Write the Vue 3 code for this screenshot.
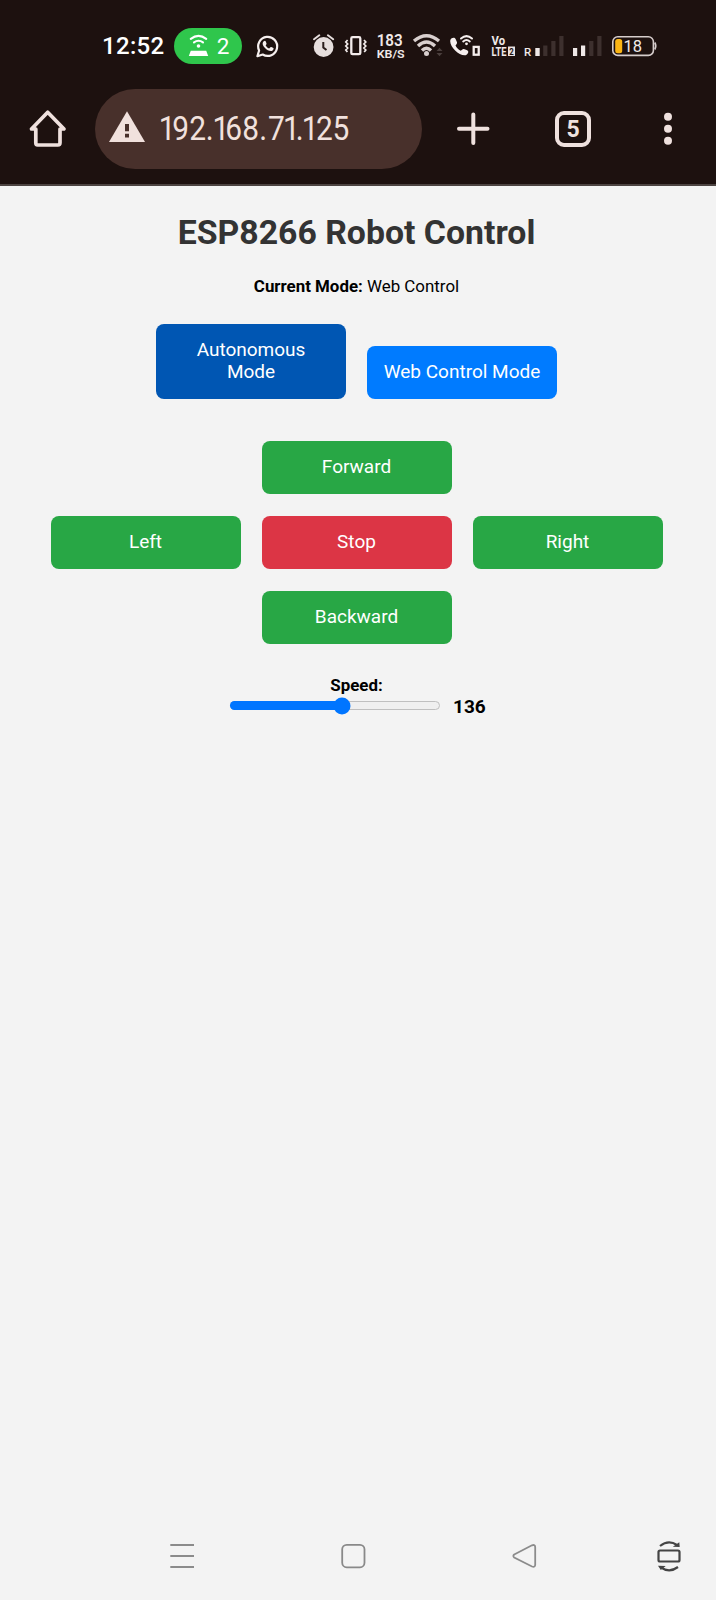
<script setup>
import { ref, computed } from 'vue'

const mode = ref('Web Control')
const speed = ref(136)
const fill = computed(() => (speed.value / 255) * 100 + '%')
</script>

<template>
  <div class="screen">
    <div class="status">
      <span class="clock">12:52</span>
      <div class="hotspot">
        <svg viewBox="188 34 22 24" width="22" height="24">
          <g fill="none" stroke="#fff" stroke-width="2.1" stroke-linecap="round">
            <path d="M190.800 38.800Q198.500 33 206.200 38.800" />
            <path d="M194 42.400Q198.500 39.200 203 42.400" />
          </g>
          <circle cx="198.500" cy="46" r="1.800" fill="#fff" />
          <path d="M190.800 50.800H206.200L208.200 56H188.800Z" fill="#fff" />
        </svg>
        <span>2</span>
      </div>
      <svg class="whatsapp" viewBox="254 32 28 28" width="28" height="28">
        <path d="M257.400 56.200L259.100 50.500A9.500 9.500 0 1 1 262.700 54.500Z" fill="none" stroke="#f6efee" stroke-width="2.200" stroke-linejoin="round" />
        <path d="M263.700 41.300C264.700 40.300 265.500 40.700 265.900 41.700L266.500 43.400C266.700 44.100 266 44.700 265.600 45.200C266.400 46.800 267.500 47.900 269.100 48.600L270.500 47.200C271 46.800 271.600 47.200 273.300 48.100C274 48.500 273.600 49.700 272.600 50.500C270.700 52.100 267.100 50.200 265 48C262.700 45.700 261.800 43 263.700 41.300Z" fill="#f6efee" />
      </svg>
      <svg class="alarm" viewBox="310 32 28 28" width="28" height="28">
        <circle cx="323.600" cy="47" r="9.900" fill="#e6dedd" />
        <path d="M314 39.200L319.300 35.300M327.900 35.300L333.200 39.200" stroke="#e6dedd" stroke-width="2" stroke-linecap="round" />
        <path d="M323.300 42V47.500L326.500 50" fill="none" stroke="#2a1d1b" stroke-width="2" />
      </svg>
      <svg class="vibrate" viewBox="344 32 24 28" width="24" height="28">
        <rect x="351.300" y="37.200" width="9" height="17" rx="1.300" fill="none" stroke="#f3eceb" stroke-width="2.300" />
        <path d="M347.600 40L345.800 42L347.700 44L345.800 46L347.700 48L345.800 50L347.400 52M364 40L365.800 42L363.900 44L365.800 46L363.900 48L365.800 50L364.200 52" fill="none" stroke="#f3eceb" stroke-width="1.700" />
      </svg>
      <svg class="rate" viewBox="375 32 32 28" width="32" height="28">
        <text x="376.700" y="46.400" font-size="16" font-weight="600" textLength="26" lengthAdjust="spacingAndGlyphs">183</text>
        <text x="376.700" y="58" font-size="11.500" font-weight="600" textLength="28" lengthAdjust="spacingAndGlyphs">KB/S</text>
      </svg>
      <svg class="wifi" viewBox="411 32 34 28" width="34" height="28">
        <g fill="none" stroke="#d9d0cf" stroke-width="3.400">
          <path d="M414 41Q426.500 30.500 439 41" />
          <path d="M418 46Q426.500 38 435 46" />
          <path d="M422 50.500Q426.500 46 431 50.500" />
        </g>
        <circle cx="426.500" cy="53.500" r="2.500" fill="#d9d0cf" />
        <path d="M436.500 51L439.500 47.800L442.500 51ZM436.500 53L439.500 56.200L442.500 53Z" fill="#4b3f3d" />
      </svg>
      <svg class="call" viewBox="448 32 34 28" width="34" height="28">
        <path d="M451.300 38.500C453 37.300 454.800 37.300 455.600 39L457 42.200C457.400 43.300 456.200 44.500 455.500 45.400C456.800 48 458.200 49.300 460.700 50.700L463.100 49.100C464 48.700 467.200 50 468 50.900C468.900 52.200 467.200 55 465 55.300C459 55.700 450.200 47.300 450.200 41.300C450.200 40.200 450.600 39.100 451.300 38.500Z" fill="#f6efee" />
        <g fill="none" stroke="#f6efee" stroke-width="2" stroke-linecap="round">
          <path d="M461 38.500Q466.500 33.700 472 38.500" />
          <path d="M463.200 41.400Q466.500 38.500 469.800 41.400" />
        </g>
        <circle cx="466.500" cy="43.800" r="1.400" fill="#f6efee" />
        <rect x="473.700" y="46.900" width="5" height="7.800" fill="none" stroke="#f6efee" stroke-width="2.300" />
      </svg>
      <svg class="volte" viewBox="490 32 27 28" width="27" height="28">
        <text x="491.500" y="45" font-size="12" font-weight="700" textLength="13.500" lengthAdjust="spacingAndGlyphs">Vo</text>
        <text x="491.500" y="56" font-size="12" font-weight="700" textLength="15" lengthAdjust="spacingAndGlyphs">LTE</text>
        <rect x="508" y="46.500" width="7" height="9.500" fill="#e9e1e0" />
        <text class="sim" x="509.300" y="54.500" font-size="9" font-weight="700" textLength="4.500" lengthAdjust="spacingAndGlyphs">2</text>
      </svg>
      <svg class="signal-a" viewBox="523 32 44 28" width="44" height="28">
        <text x="523.900" y="56.200" font-size="11.500" font-weight="500">R</text>
        <path d="M535.300 48H539.700V56H535.300Z" fill="#efe8e7" />
        <path d="M543.200 45.500H547.400V56H543.200ZM551.300 41H555.500V56H551.300ZM559.300 36H563.500V56H559.300Z" fill="#3d302e" />
      </svg>
      <svg class="signal-b" viewBox="570 32 36 28" width="36" height="28">
        <path d="M573 48H577.200V56H573ZM581 45.500H585.200V56H581Z" fill="#efe8e7" />
        <path d="M589.200 41H593.400V56H589.200ZM597.300 36H601.500V56H597.300Z" fill="#3d302e" />
      </svg>
      <svg class="battery" viewBox="610 32 48 28" width="48" height="28">
        <rect x="612.800" y="36.800" width="40.600" height="18.600" rx="5" fill="none" stroke="#d6cdcc" stroke-width="1.600" />
        <path d="M654.800 42.500Q656.800 46 654.800 49.500" fill="none" stroke="#d6cdcc" stroke-width="1.600" />
        <rect x="615.200" y="39" width="7" height="14.200" rx="2.500" fill="#fbb514" />
        <text x="623.500" y="52" font-size="16.500">18</text>
      </svg>
    </div>

    <div class="toolbar">
      <svg class="home" viewBox="28 109 40 40" width="40" height="40">
        <path d="M31.500 129L47.700 112.300L64 129H60V142.800Q60 145 57.800 145H37.600Q35.800 145 35.800 142.800V129Z" fill="none" stroke="#efe1de" stroke-width="3.700" stroke-linejoin="round" />
      </svg>
      <div class="address">
        <svg viewBox="95 89 327 80" width="327" height="80">
          <path d="M127 111.300L145 142H109Z" fill="#f1e1dd" />
          <path d="M125 124H129V131.300H125ZM125 133.800H129V137.500H125Z" fill="#48302b" />
          <text class="url" transform="translate(158.800 140.200) scale(.92 1)" y="0" x="0 14.500 33 50.900 58.500 72.300 90.600 109.300 118.800 135 148.800 155.300 171 188.800">192.168.71.125</text>
        </svg>
      </div>
      <svg class="plus" viewBox="455 111 37 37" width="37" height="37">
        <path d="M473.300 114.500V143M459 128.700H487.500" stroke="#efe1de" stroke-width="4" stroke-linecap="round" />
      </svg>
      <div class="tabs">5</div>
      <svg class="more" viewBox="662 110 12 38" width="12" height="38">
        <g fill="#efe1de">
          <circle cx="668" cy="116.800" r="4" />
          <circle cx="668" cy="128.800" r="4" />
          <circle cx="668" cy="140.700" r="4" />
        </g>
      </svg>
    </div>

    <main class="page">
      <h1>ESP8266 Robot Control</h1>
      <p><b>Current Mode:</b> {{ mode }}</p>
      <div class="modes">
        <button class="btn auto">Autonomous<br />Mode</button>
        <button class="btn web">Web Control Mode</button>
      </div>
      <div class="pad">
        <button class="btn forward">Forward</button>
        <button class="btn left">Left</button>
        <button class="btn stop">Stop</button>
        <button class="btn right">Right</button>
        <button class="btn backward">Backward</button>
      </div>
      <div class="speed-label">Speed:</div>
      <div class="speed">
        <div class="track">
          <div class="fill" :style="{ width: fill }"></div>
          <div class="thumb" :style="{ left: fill }"></div>
        </div>
        <span>{{ speed }}</span>
      </div>
    </main>

    <nav class="nav">
      <svg viewBox="168 1541 30 30" width="30" height="30">
        <path d="M170.300 1545H194M170.300 1556H194M170.300 1567H194" stroke="#8b8b8b" stroke-width="2" />
      </svg>
      <svg class="recent" viewBox="338 1541 30 30" width="30" height="30">
        <rect x="342.200" y="1544.800" width="22.300" height="22.500" rx="4.500" fill="none" stroke="#898989" stroke-width="1.800" />
      </svg>
      <svg class="back" viewBox="510 1541 30 30" width="30" height="30">
        <path d="M514.200 1554.500L532 1545.300Q535.200 1544.200 535.200 1547.300V1564.800Q535.200 1567.500 532 1566.500L514.200 1557.500Q512.500 1556 514.200 1554.500Z" fill="none" stroke="#8b8b8b" stroke-width="1.800" />
      </svg>
      <svg class="rotate" viewBox="654 1538 30 36" width="30" height="36">
        <rect x="658.500" y="1550.500" width="21" height="11" rx="1.500" fill="none" stroke="#444" stroke-width="2.200" />
        <path d="M660 1546Q668.500 1539.300 677 1545M678 1567Q669.500 1573.300 661 1567.500" fill="none" stroke="#444" stroke-width="2.200" />
        <path d="M672.800 1546.800L679.700 1546.900L679.300 1542.300ZM665.700 1566L658 1565.700L660.800 1570Z" fill="#444" />
      </svg>
    </nav>
  </div>
</template>

<style>
body {
  margin: 0;
}
</style>

<style scoped>
.screen {
  width: 716px;
  height: 1600px;
  display: flex;
  flex-direction: column;
  overflow: hidden;
  background: #f3f3f3;
  font-family: Roboto, "Liberation Sans", sans-serif;
}
svg {
  display: block;
  flex: none;
}
.status {
  height: 75px;
  box-sizing: border-box;
  padding-top: 28px;
  display: flex;
  align-items: flex-start;
  background: #1d110f;
  color: #fff;
}
.status > svg {
  margin-top: 4px;
}
.status text {
  fill: #f0e9e8;
}
.status .sim {
  fill: #1d110f;
}
.clock {
  width: 72px;
  margin-left: 102px;
  font-size: 24px;
  font-weight: 500;
  line-height: 37px;
  letter-spacing: 0.3px;
}
.hotspot {
  width: 68px;
  height: 36px;
  box-sizing: border-box;
  padding: 0 12.500px 0 14px;
  display: flex;
  align-items: center;
  justify-content: space-between;
  border-radius: 18px;
  background: #2fc64c;
  font-size: 22.500px;
}
.whatsapp { margin-left: 12px; }
.alarm { margin-left: 28px; }
.vibrate { margin-left: 6px; }
.rate { margin-left: 7px; }
.wifi { margin-left: 4px; }
.call { margin-left: 3px; }
.volte { margin-left: 8px; }
.signal-a { margin-left: 6px; }
.signal-b { margin-left: 3px; }
.battery { margin-left: 4px; }

.toolbar {
  height: 111px;
  box-sizing: border-box;
  padding-top: 14px;
  display: flex;
  align-items: flex-start;
  background: #1d110f;
  border-bottom: 2px solid #4c4341;
}
.toolbar > svg {
  margin-top: 21px;
}
.toolbar > .home {
  margin: 20px 0 0 28px;
}
.address {
  width: 327px;
  height: 80px;
  margin-left: 27px;
  border-radius: 40px;
  background: #48302b;
}
.url {
  font-size: 32.500px;
  fill: #f1e1dd;
}
.toolbar > .plus {
  margin: 22px 0 0 33px;
}
.tabs {
  width: 36px;
  height: 36px;
  box-sizing: border-box;
  margin: 22px 0 0 63px;
  border: 4px solid #efe1de;
  border-radius: 9px;
  color: #efe1de;
  font-size: 23px;
  font-weight: 700;
  line-height: 29px;
  text-align: center;
}
.more { margin-left: 71px; }

.page {
  flex: 1;
  width: 713px;
  text-align: center;
}
h1 {
  margin: 27px 0 0;
  color: #333;
  font-size: 33.800px;
  line-height: 40px;
}
p {
  margin: 23px 0 0;
  font-size: 16.900px;
  line-height: 20px;
}
.modes {
  height: 75.500px;
  margin-top: 27.500px;
  display: flex;
  justify-content: center;
  align-items: flex-end;
  gap: 21px;
}
.btn {
  width: 190px;
  height: 53.500px;
  padding: 0;
  border: 0;
  border-radius: 8px;
  color: #fff;
  background: #28a745;
  font-family: inherit;
  font-size: 19px;
  line-height: 22.500px;
}
.modes .auto {
  height: 75.500px;
  background: #0056b3;
}
.modes .web {
  background: #007bff;
}
.pad {
  margin-top: 41.500px;
  display: grid;
  grid-template-columns: repeat(3, 190px);
  justify-content: center;
  gap: 21.500px 21px;
}
.forward,
.backward {
  grid-column: 2;
}
.left {
  grid-column: 1;
}
.pad .stop {
  background: #dc3545;
}
.speed-label {
  margin-top: 30.500px;
  font-size: 16.900px;
  font-weight: 700;
  line-height: 20px;
}
.speed {
  height: 24px;
  display: flex;
  align-items: center;
  gap: 13px;
  padding-left: 230px;
  font-size: 19px;
  font-weight: 700;
}
.track {
  position: relative;
  width: 210px;
  height: 8.500px;
  margin-top: -2px;
  box-sizing: border-box;
  border: 1px solid #bfbfbf;
  border-radius: 5px;
  background: #efefef;
}
.fill {
  height: 8.500px;
  margin: -1px;
  border-radius: 5px;
  background: #0075ff;
}
.thumb {
  position: absolute;
  top: 50%;
  width: 17px;
  height: 17px;
  border-radius: 50%;
  background: #0075ff;
  transform: translate(-50%, -50%);
}
.nav {
  height: 65px;
  padding-left: 168px;
  display: flex;
  align-items: flex-start;
}
.nav svg { margin-top: 6px; }
.nav .recent { margin-left: 140px; }
.nav .back { margin-left: 142px; }
.nav .rotate { margin: 3px 0 0 114px; }
</style>
